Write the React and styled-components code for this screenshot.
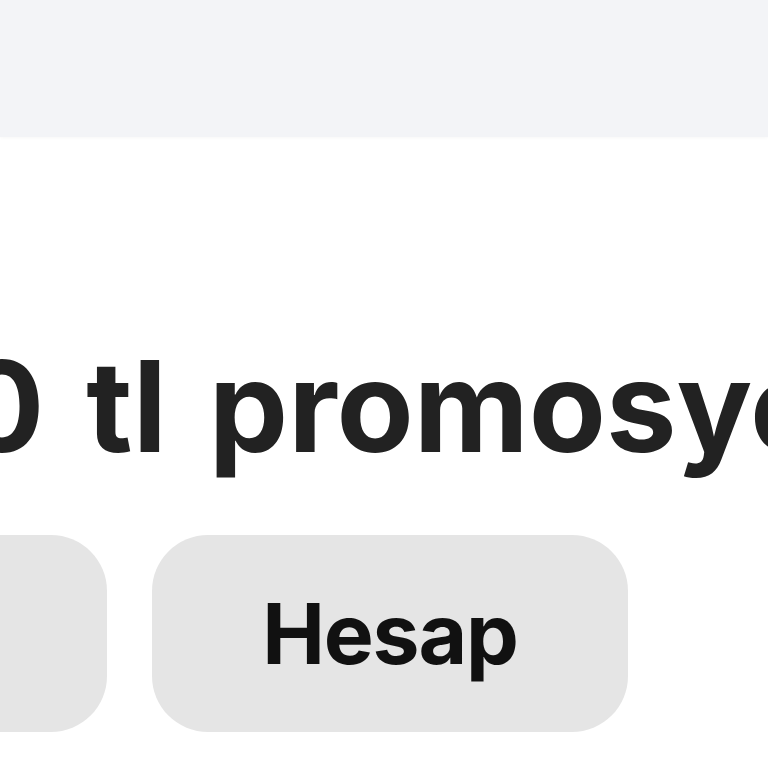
import React from "react";
import styled, { createGlobalStyle } from "styled-components";

const Global = createGlobalStyle`
  html, body { margin: 0; padding: 0; background: #ffffff; overflow: hidden; }
  body { font-family: "Inter", "Liberation Sans", sans-serif; }
`;

const Page = styled.div`
  width: 768px;
  height: 768px;
  overflow: hidden;
  display: flex;
  flex-direction: column;
  background: #ffffff;
`;

const TopBar = styled.header`
  flex: 0 0 137px;
  background: #f3f4f7;
  box-shadow: 0 1px 3px rgba(0, 0, 0, 0.03);
`;

const Content = styled.main`
  display: flex;
  flex-direction: column;
  padding-top: 206px;
  margin-left: ${(p) => p.$shift}px;
`;

const Title = styled.h1`
  margin: 0;
  font-family: "Inter", "Liberation Sans", sans-serif;
  font-weight: 700;
  font-size: 126px;
  line-height: 1;
  color: #222222;
  white-space: nowrap;
  letter-spacing: 0;
  word-spacing: 12px;
`;

const ButtonRow = styled.div`
  display: flex;
  gap: 45px;
  margin-top: 66px;
  margin-left: ${(p) => p.$shift}px;
`;

const Pill = styled.button`
  flex: 0 0 476px;
  height: 197px;
  border: none;
  border-radius: 56px;
  background: #e5e5e5;
  display: flex;
  align-items: center;
  justify-content: center;
  font-family: "Inter", "Liberation Sans", sans-serif;
  font-weight: 700;
  font-size: 84px;
  letter-spacing: -1.2px;
  color: #111111;
  padding: 0;
`;

export default function App() {
  return (
    <Page>
      <Global />
      <TopBar />
      <Content $shift={-206}>
        <Title>500 tl promosyon</Title>
      </Content>
      <ButtonRow $shift={-369}>
        <Pill>Yükle</Pill>
        <Pill>Hesap</Pill>
      </ButtonRow>
    </Page>
  );
}
